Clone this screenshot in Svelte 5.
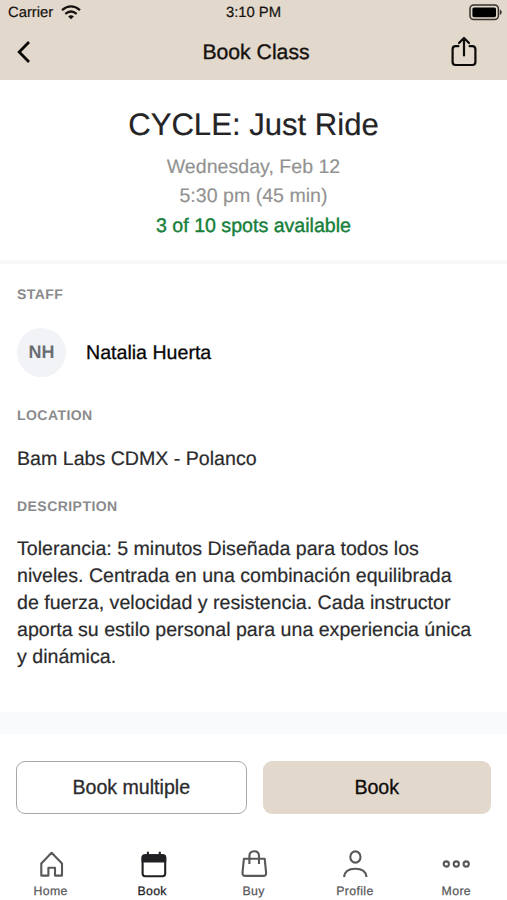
<script>
  const tabs = ['Home', 'Book', 'Buy', 'Profile', 'More'];
  const active = 'Book';
  const description = [
    'Tolerancia: 5 minutos Diseñada para todos los',
    'niveles. Centrada en una combinación equilibrada',
    'de fuerza, velocidad y resistencia. Cada instructor',
    'aporta su estilo personal para una experiencia única',
    'y dinámica.'
  ];
</script>

<div class="screen">
  <header>
    <div class="status">
      <div class="carrier">
        <span class="label">Carrier</span>
        <svg width="20" height="15" viewBox="0 0 20 15" fill="none" stroke="#15120f" stroke-width="2.3">
          <path d="M1 5.2Q10-2.4 19 5.2" />
          <path d="M4.3 8.9Q10 4.2 15.7 8.9" />
          <path d="M7.1 11.4Q10 9 12.9 11.4L10 14.3Z" fill="#15120f" stroke="none" />
        </svg>
      </div>
      <span class="label time">3:10 PM</span>
      <svg class="battery" width="33" height="17" viewBox="0 0 33 17">
        <rect x="1" y="1" width="28.4" height="14.6" rx="3.8" fill="none" stroke="#35302b" stroke-width="1.5" />
        <rect x="3.4" y="3.4" width="23.6" height="9.8" rx="1.6" fill="#000" />
        <path d="M30.8 5.6q1.9.7 1.9 2.7t-1.9 2.7Z" fill="#35302b" />
      </svg>
    </div>
    <div class="bar">
      <svg width="14" height="24" viewBox="0 0 14 24" fill="none" stroke="#0b0a09" stroke-width="2.8">
        <path d="M12 2 2.2 12l9.8 10" />
      </svg>
      <h1>Book Class</h1>
      <svg width="26" height="31" viewBox="0 0 26 31" fill="none" stroke="#0b0a09" stroke-width="2.2" stroke-linecap="round" stroke-linejoin="round">
        <path d="M7.4 10.2H4.6Q1.6 10.2 1.6 13.2V26Q1.6 29 4.6 29H21.4Q24.4 29 24.4 26V13.2Q24.4 10.2 21.4 10.2H18.6" />
        <path d="M13 19.5V2M8 7 13 2l5 5" />
      </svg>
    </div>
  </header>

  <section class="summary">
    <h2>CYCLE: Just Ride</h2>
    <p>Wednesday, Feb 12</p>
    <p>5:30 pm (45 min)</p>
    <p class="spots">3 of 10 spots available</p>
  </section>

  <section class="details">
    <h3>STAFF</h3>
    <div class="person">
      <span class="avatar">NH</span>
      <span class="name">Natalia Huerta</span>
    </div>
    <h3>LOCATION</h3>
    <p class="place">Bam Labs CDMX - Polanco</p>
    <h3>DESCRIPTION</h3>
    <p class="copy">
      {#each description as line}<span>{line}</span>{/each}
    </p>
  </section>

  <div class="actions">
    <button class="outline">Book multiple</button>
    <button class="solid">Book</button>
  </div>

  <nav>
    {#each tabs as tab}
      <div class="tab" class:active={tab === active}>
        <svg width="30" height="30" viewBox="0 0 30 30" fill="none" stroke="currentColor" stroke-width="2.1" stroke-linejoin="round">
          {#if tab === 'Home'}
            <path d="M15.6 3.8 26 14.4V26.6H19V18.8H12.4V26.6H5.3V14.4Z" />
          {:else if tab === 'Book'}
            <rect x="5.6" y="6.3" width="22.6" height="20.9" rx="2.6" />
            <path d="M5.6 12.4V8.5Q5.6 6.3 8.2 6.3H25.6Q28.2 6.3 28.2 8.5V12.4Z" fill="currentColor" />
            <path d="M10.9 2.8V7M22.8 2.8V7" />
          {:else if tab === 'Buy'}
            <path d="M4.9 9.8H25.7L27.1 23.6Q27.3 26.9 24.4 26.9H6.2Q3.3 26.9 3.5 23.6Z" />
            <path d="M10.4 14.9V7Q10.4 2.2 15.2 2.2T20 7V14.9" />
          {:else if tab === 'Profile'}
            <ellipse cx="15.4" cy="8" rx="5.1" ry="5.6" />
            <path d="M4 28C4.7 22.4 8.2 19.8 15.3 19.8S25.9 22.4 26.6 28" />
          {:else}
            <circle cx="5.3" cy="15" r="2.6" />
            <circle cx="15.3" cy="15" r="2.6" />
            <circle cx="25.2" cy="15" r="2.6" />
          {/if}
        </svg>
        <span>{tab}</span>
      </div>
    {/each}
  </nav>
</div>

<style>
  :global(body) { margin: 0; background: #fff; }
  .screen {
    width: 507px;
    height: 900px;
    overflow: hidden;
    display: flex;
    flex-direction: column;
    background: #fff;
    font-family: 'Liberation Sans', Arial, sans-serif;
    font-size: 19.6px;
    color: #2b2b2d;
    text-rendering: geometricPrecision;
  }
  h1, h2, h3, p { margin: 0; font-weight: 400; }
  svg { display: block; flex: none; }
  header { height: 80px; background: #e2d8cc; color: #15120f; flex: none; }
  .status {
    height: 24px;
    display: grid;
    grid-template-columns: 1fr auto 1fr;
    align-items: center;
    padding: 0 5px 0 8px;
    font-size: 14.8px;
    -webkit-text-stroke: 0.2px;
  }
  .carrier { display: flex; align-items: center; gap: 8px; }
  .label { padding-top: 2px; }
  .time { padding-right: 3px; }
  .battery { justify-self: end; }
  .bar {
    height: 55px;
    display: grid;
    grid-template-columns: 26px 1fr 26px;
    align-items: center;
    padding: 0 30px 0 17px;
  }
  h1 {
    font-size: 21.2px;
    text-align: center;
    padding: 2px 0 0 18px;
    -webkit-text-stroke: 0.35px;
  }
  .summary {
    height: 180px;
    box-sizing: border-box;
    padding-top: 25px;
    text-align: center;
    color: #929292;
    flex: none;
  }
  h2 {
    font-size: 31.1px;
    line-height: 40px;
    color: #242426;
    margin-bottom: 8px;
    -webkit-text-stroke: 0.2px;
  }
  .summary p { line-height: 29.3px; -webkit-text-stroke: 0.15px; }
  .summary .spots { color: #16803a; -webkit-text-stroke: 0.4px; }
  .details {
    height: 452px;
    box-sizing: border-box;
    border-top: 4px solid #f7f8f9;
    padding: 20px 17px 0;
    flex: none;
  }
  h3 {
    font-size: 14px;
    line-height: 20px;
    font-weight: 700;
    letter-spacing: 0.45px;
    color: #8a8a8c;
  }
  .person { display: flex; align-items: center; gap: 20px; margin: 24px 0 28px; }
  .avatar {
    width: 49px;
    height: 49px;
    border-radius: 50%;
    display: flex;
    align-items: center;
    justify-content: center;
    background: #f1f3f6;
    color: #6b6d74;
    font-size: 18px;
    font-weight: 700;
  }
  .name { color: #060606; padding-top: 1px; -webkit-text-stroke: 0.3px; }
  .place { line-height: 28px; margin: 20px 0 23px; -webkit-text-stroke: 0.2px; }
  .copy { margin-top: 20px; line-height: 27px; -webkit-text-stroke: 0.2px; }
  .copy span { display: block; white-space: nowrap; }
  .actions {
    border-top: 22px solid #f8fafb;
    padding: 27px 16px 0;
    display: flex;
    gap: 16px;
    flex: none;
  }
  button {
    flex: 1 1 0;
    min-width: 0;
    box-sizing: border-box;
    height: 53px;
    border-radius: 9px;
    border: 0;
    padding: 0;
    font: inherit;
    -webkit-text-stroke: 0.3px;
  }
  .outline { background: #fff; border: 1.3px solid #a9a9ab; color: #2b2b2d; }
  .solid { background: #e2d8cc; color: #0e0c0a; }
  nav { display: flex; margin-top: 35px; }
  .tab {
    flex: 1;
    display: flex;
    flex-direction: column;
    align-items: center;
    color: #58585a;
    font-size: 12.3px;
    line-height: 16px;
    letter-spacing: 0.35px;
    gap: 4px;
    -webkit-text-stroke: 0.25px;
  }
  .active { color: #202024; }
</style>
